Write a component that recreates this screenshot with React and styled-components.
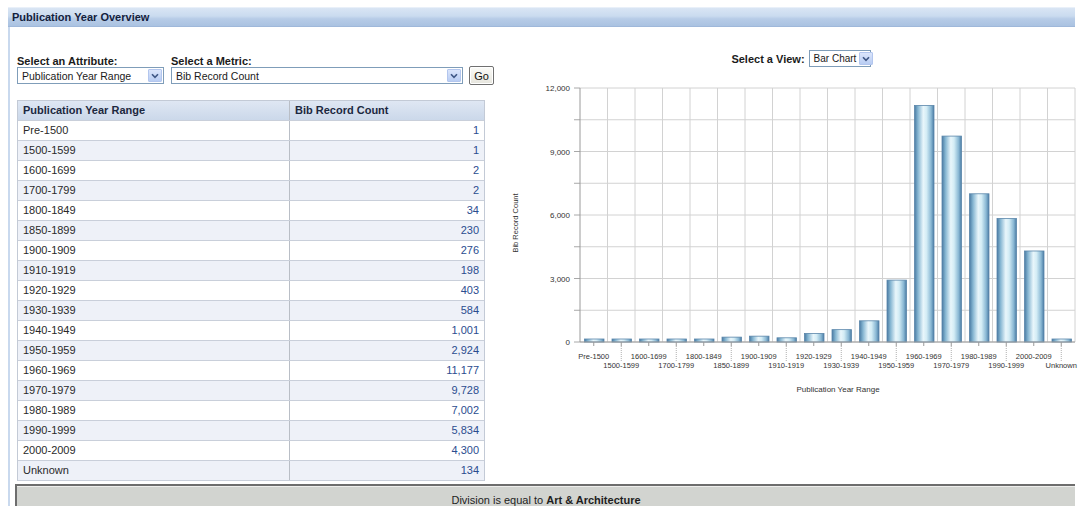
import React from "react";
import styled, { createGlobalStyle } from "styled-components";

const GlobalStyle = createGlobalStyle`
  html, body {
    margin: 0;
    padding: 0;
    background: #ffffff;
    overflow: hidden;
  }
  body {
    font-family: "Liberation Sans", Arial, sans-serif;
    font-size: 11px;
    color: #222;
  }
`;

// --- layout ---

const Page = styled.div`
  width: 1078px;
  height: 506px;
  box-sizing: border-box;
  padding: 7px 3px 0 8px;
`;

const Panel = styled.section`
  border-left: 2px solid #c9d9ee;
  height: 499px;
`;

const PanelHeader = styled.div`
  height: 20px;
  box-sizing: border-box;
  margin-left: -2px;
  padding-left: 4px;
  border-top: 1px solid #e9f0f9;
  border-bottom: 1px solid #9fb8da;
  background: linear-gradient(#d9e5f4 0%, #cadbef 45%, #b7cce7 60%, #aac2e1 100%);
  font-weight: bold;
  font-size: 11px;
  line-height: 18px;
  color: #13213d;
`;

const PanelBody = styled.div`
  padding-left: 5px;
`;

const ContentRow = styled.div`
  display: flex;
  padding-left: 2px;
`;

const LeftColumn = styled.div`
  width: 483px;
  padding-top: 28px;
`;

const RightColumn = styled.div`
  width: 578px;
  flex-shrink: 0;
  padding-top: 23px;
`;

// --- form controls ---

const Controls = styled.div`
  display: flex;
  align-items: flex-end;
  gap: 7px;
`;

const Field = styled.div`
  display: flex;
  flex-direction: column;
  width: ${(p) => p.width}px;
`;

const Label = styled.span`
  font-weight: bold;
  font-size: 11px;
  line-height: 12px;
  color: #1b1b1b;
  white-space: nowrap;
`;

const SelectBox = styled.div`
  display: flex;
  align-items: center;
  justify-content: space-between;
  gap: 3px;
  width: ${(p) => (p.width ? `${p.width}px` : "100%")};
  height: 17px;
  box-sizing: border-box;
  border: 1px solid #7f9db9;
  background: #fff;
  padding: 0 1px 0 4px;
  font-size: ${(p) => (p.small ? "10px" : "10.5px")};
  color: #1a1a1a;
  white-space: nowrap;
`;

const DropButton = styled.span`
  display: flex;
  align-items: center;
  justify-content: center;
  flex-shrink: 0;
  width: 14px;
  height: 13px;
  box-sizing: border-box;
  border: 1px solid #b3c6ee;
  border-radius: 1px;
  background: linear-gradient(#dbe5fb, #b9cdf3);
`;

const GoButton = styled.button`
  width: 25px;
  height: 19px;
  margin-left: -1px;
  margin-bottom: -1px;
  padding: 0;
  border: 1px solid #707070;
  border-radius: 2px;
  background: linear-gradient(#fbfbf8, #e6e5dd);
  box-shadow: inset 0 0 0 1px #ffffff;
  font-family: "Liberation Sans", Arial, sans-serif;
  font-size: 11px;
  color: #111;
`;

// --- table ---

const DataTable = styled.div`
  margin-top: 16px;
  width: 466px;
  border: 1px solid #c3cad6;
  border-bottom: none;
`;

const Row = styled.div`
  display: grid;
  grid-template-columns: 271px 1fr;
  height: 20px;
  box-sizing: border-box;
  border-bottom: 1px solid #c9cfda;
  background: ${(p) =>
    p.head ? "linear-gradient(#dfe7f3, #cbd8ea)" : p.alt ? "#eef1f8" : "#ffffff"};
`;

const Cell = styled.div`
  padding: 0 5px;
  line-height: 19px;
  font-size: 11px;
  font-weight: ${(p) => (p.head ? "bold" : "normal")};
  color: ${(p) => (p.head ? "#1c2840" : p.num ? "#2b4d8f" : "#2a2a2a")};
  text-align: ${(p) => (p.num ? "right" : "left")};
  border-left: ${(p) => (p.split ? "1px solid #b9bec6" : "none")};
  white-space: nowrap;
`;

// --- view picker ---

const ViewRow = styled.div`
  display: flex;
  align-items: center;
  justify-content: center;
  gap: 4px;
  padding-left: 30px;
`;

const ChartSvg = styled.svg`
  display: block;
  margin-top: 11px;
  overflow: visible;
`;

// --- footer ---

const FilterBar = styled.div`
  margin-top: 3px;
  width: 1060px;
  height: 24px;
  box-sizing: border-box;
  border-top: 2px solid #6d6d6d;
  border-left: 2px solid #6d6d6d;
  background: #d2d4d0;
  box-shadow: inset 0 1px 0 #eeeeec;
  padding-top: 8px;
  text-align: center;
  font-size: 11px;
  line-height: 13px;
  color: #1e1e1e;

  b {
    font-weight: bold;
  }
`;

// --- data ---

const rows = [
  ["Pre-1500", 1],
  ["1500-1599", 1],
  ["1600-1699", 2],
  ["1700-1799", 2],
  ["1800-1849", 34],
  ["1850-1899", 230],
  ["1900-1909", 276],
  ["1910-1919", 198],
  ["1920-1929", 403],
  ["1930-1939", 584],
  ["1940-1949", 1001],
  ["1950-1959", 2924],
  ["1960-1969", 11177],
  ["1970-1979", 9728],
  ["1980-1989", 7002],
  ["1990-1999", 5834],
  ["2000-2009", 4300],
  ["Unknown", 134],
];

const fmt = (n) => n.toLocaleString("en-US");

const Chevron = () => (
  <svg width="8" height="6" viewBox="0 0 8 6">
    <path d="M1 1.2 L4 4.4 L7 1.2" fill="none" stroke="#3f5785" strokeWidth="1.6" />
  </svg>
);

const Select = ({ value, width, small }) => (
  <SelectBox width={width} small={small}>
    <span>{value}</span>
    <DropButton>
      <Chevron />
    </DropButton>
  </SelectBox>
);

// bar chart of the record counts
const BarChart = () => {
  const left = 83;
  const catW = 27.5;
  const top = 10;
  const base = 264;
  const max = 12000;
  const scale = (base - top) / max;
  const y = (v) => base - v * scale;
  const grid = [];
  for (let v = 0; v <= max; v += 1500) grid.push(v);
  const right = left + catW * rows.length;

  return (
    <ChartSvg width="578" height="330">
      <defs>
        <linearGradient id="barFill" x1="0" x2="1" y1="0" y2="0">
          <stop offset="0" stopColor="#4a7ba3" />
          <stop offset="0.18" stopColor="#86b6d2" />
          <stop offset="0.45" stopColor="#e9f6fb" />
          <stop offset="0.62" stopColor="#d3ecf5" />
          <stop offset="0.85" stopColor="#8ab8d4" />
          <stop offset="1" stopColor="#4b7ca4" />
        </linearGradient>
      </defs>

      {grid.map((v) => (
        <g key={v}>
          <line x1={left} x2={right} y1={y(v)} y2={y(v)} stroke="#d2d2d2" />
          <line x1={left - 6} x2={left} y1={y(v)} y2={y(v)} stroke="#a8a8a8" />
        </g>
      ))}
      {rows.map((_, i) => (
        <line
          key={i}
          x1={left + (i + 1) * catW}
          x2={left + (i + 1) * catW}
          y1={top}
          y2={base}
          stroke="#d2d2d2"
        />
      ))}

      {[0, 3000, 6000, 9000, 12000].map((v) => (
        <text
          key={v}
          x={left - 10}
          y={y(v) + 3}
          textAnchor="end"
          fontSize="8"
          fill="#333"
          fontFamily="Liberation Sans, Arial, sans-serif"
        >
          {fmt(v)}
        </text>
      ))}

      {rows.map(([name, v], i) => {
        const h = Math.max(3, v * scale);
        return (
          <rect
            key={name}
            x={left + i * catW + 4.5}
            y={base - h}
            width={catW - 8}
            height={h}
            fill="url(#barFill)"
            stroke="#5a86aa"
            strokeWidth="0.8"
          />
        );
      })}

      <line x1={left} x2={left} y1={top} y2={base} stroke="#9a9a9a" />
      <line x1={left} x2={right} y1={base} y2={base} stroke="#9a9a9a" />

      {rows.map(([name], i) => {
        const cx = left + (i + 0.5) * catW;
        const odd = i % 2 === 1;
        return (
          <g key={name}>
            <line x1={cx} x2={cx} y1={base} y2={base + 4} stroke="#9a9a9a" />
            {odd && (
              <line
                x1={cx}
                x2={cx}
                y1={base + 4}
                y2={base + 20}
                stroke="#b0b0b0"
                strokeDasharray="1 1"
              />
            )}
            <text
              x={cx}
              y={odd ? 290 : 281}
              textAnchor="middle"
              fontSize="7.5"
              fill="#333"
              fontFamily="Liberation Sans, Arial, sans-serif"
            >
              {name}
            </text>
          </g>
        );
      })}

      <text
        x="341"
        y="314"
        textAnchor="middle"
        fontSize="8"
        fill="#333"
        fontFamily="Liberation Sans, Arial, sans-serif"
      >
        Publication Year Range
      </text>
      <text
        x="0"
        y="0"
        transform="translate(21 145) rotate(-90)"
        textAnchor="middle"
        fontSize="7.5"
        fill="#333"
        fontFamily="Liberation Sans, Arial, sans-serif"
      >
        Bib Record Count
      </text>
    </ChartSvg>
  );
};

export default function App() {
  return (
    <Page>
      <GlobalStyle />
      <Panel>
        <PanelHeader>Publication Year Overview</PanelHeader>
        <PanelBody>
          <ContentRow>
            <LeftColumn>
              <Controls>
                <Field width={147}>
                  <Label>Select an Attribute:</Label>
                  <Select value="Publication Year Range" />
                </Field>
                <Field width={292}>
                  <Label>Select a Metric:</Label>
                  <Select value="Bib Record Count" />
                </Field>
                <GoButton>Go</GoButton>
              </Controls>

              <DataTable>
                <Row head>
                  <Cell head>Publication Year Range</Cell>
                  <Cell head split>
                    Bib Record Count
                  </Cell>
                </Row>
                {rows.map(([name, v], i) => (
                  <Row key={name} alt={i % 2 === 1}>
                    <Cell>{name}</Cell>
                    <Cell num split>
                      {fmt(v)}
                    </Cell>
                  </Row>
                ))}
              </DataTable>
            </LeftColumn>

            <RightColumn>
              <ViewRow>
                <Label>Select a View:</Label>
                <Select value="Bar Chart" width={62} small />
              </ViewRow>
              <BarChart />
            </RightColumn>
          </ContentRow>

          <FilterBar>
            Division is equal to <b>Art &amp; Architecture</b>
          </FilterBar>
        </PanelBody>
      </Panel>
    </Page>
  );
}
